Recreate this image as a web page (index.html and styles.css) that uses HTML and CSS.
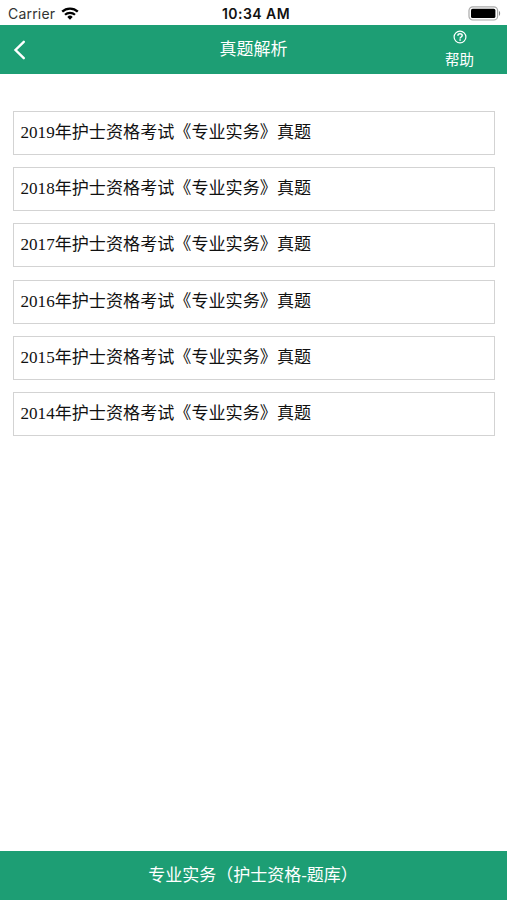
FILE: index.html
```html
<!DOCTYPE html>
<html lang="zh-CN">
<head>
    <meta charset="UTF-8">
    <meta name="viewport" content="width=device-width, initial-scale=1.0">
    <title>真题解析</title>
    <link rel="stylesheet" href="styles.css">
</head>
<body>
    <div class="status-bar">
        <div class="carrier">
            <span>Carrier</span>
            <svg class="wifi" width="18" height="13" viewBox="0 0 18 13">
                <path d="M1.2 4.7a11.2 11.2 0 0 1 15.6 0" fill="none" stroke="#000" stroke-width="2.3"/>
                <path d="M4 7.8a7.2 7.2 0 0 1 10 0" fill="none" stroke="#000" stroke-width="2.2"/>
                <path d="M9 12.8l-2.7-2.9a3.9 3.9 0 0 1 5.4 0z"/>
            </svg>
        </div>
        <div class="time">10:34 AM</div>
        <svg class="battery" width="33" height="15" viewBox="0 0 33 15">
            <rect x="1" y="0.8" width="28.6" height="13.2" rx="3.8" fill="#fff" stroke="#aaa" stroke-width="1.2"/>
            <rect x="3" y="2.8" width="24.4" height="9.2" rx="1.6"/>
            <path d="M31 5v4.8c1.5-.6 1.5-4.2 0-4.8z" fill="#888"/>
        </svg>
    </div>

    <header class="header">
        <a class="back" href="#" aria-label="返回">
            <svg width="14" height="22" viewBox="0 0 14 22">
                <path d="M10.8 2.8L2.5 11l8.3 8.2" fill="none" stroke="#fff" stroke-width="2.4" stroke-linecap="round"/>
            </svg>
        </a>
        <h1>真题解析</h1>
        <a class="help" href="#">
            <svg width="14" height="14" viewBox="0 0 14 14" fill="none" stroke="#fff">
                <circle cx="7" cy="7" r="5.9" stroke-width="1.2"/>
                <path d="M4.9 5.7c0-2.8 4.3-2.6 4.3-.2 0 1.5-2.1 1.5-2.1 3" stroke-width="1.5"/>
                <path d="M7.1 9.3v1.5" stroke-width="1.5"/>
            </svg>
            <span>帮助</span>
        </a>
    </header>

    <main class="exam-list">
        <a class="exam" href="#">2019年护士资格考试《专业实务》真题</a>
        <a class="exam" href="#">2018年护士资格考试《专业实务》真题</a>
        <a class="exam" href="#">2017年护士资格考试《专业实务》真题</a>
        <a class="exam" href="#">2016年护士资格考试《专业实务》真题</a>
        <a class="exam" href="#">2015年护士资格考试《专业实务》真题</a>
        <a class="exam" href="#">2014年护士资格考试《专业实务》真题</a>
    </main>

    <footer class="footer">专业实务（护士资格-题库）</footer>
</body>
</html>
```
FILE: styles.css
```css
* {
    margin: 0;
    padding: 0;
    box-sizing: border-box;
}

body {
    height: 100vh;
    display: flex;
    flex-direction: column;
    background: #fff;
    color: #111;
    font-family: "Liberation Sans", "Noto Sans CJK SC", sans-serif;
    overflow: hidden;
}

a {
    color: inherit;
    text-decoration: none;
}

svg {
    display: block;
}

/* Status bar */
.status-bar {
    display: grid;
    grid-template-columns: 1fr auto 1fr;
    align-items: center;
    height: 25px;
    padding: 2px 6px 0 8px;
    font-family: Inter, sans-serif;
}

.carrier {
    display: flex;
    align-items: center;
    gap: 6px;
    font-size: 14px;
    letter-spacing: 0.2px;
    color: #333;
}

.time {
    padding-left: 3px;
    font-size: 14px;
    font-weight: 600;
    letter-spacing: 0.45px;
    color: #111;
}

.battery {
    justify-self: end;
}

/* Header */
.header {
    display: grid;
    grid-template-columns: 94px 1fr 94px;
    height: 49px;
    background: #1d9e74;
    color: #fff;
}

.back {
    padding: 14px 0 0 13px;
}

.header h1 {
    font-size: 17px;
    font-weight: 400;
    line-height: 49px;
    text-align: center;
}

.help {
    display: flex;
    flex-direction: column;
    align-items: center;
    padding: 5px 1px 0 0;
    font-size: 14.5px;
    line-height: 20px;
}

.help span {
    margin-top: 6px;
}

/* Exam list */
.exam-list {
    flex: 1;
    display: flex;
    flex-direction: column;
    gap: 12.2px;
    padding: 37px 12px 0 13px;
}

.exam {
    height: 44px;
    padding-left: 6.5px;
    border: 1px solid #d3d3d3;
    font-family: "Liberation Serif", "Noto Sans CJK SC", serif;
    font-size: 17.1px;
    line-height: 41px;
}

/* Footer */
.footer {
    height: 49px;
    padding-right: 1px;
    background: #1d9e74;
    color: #fff;
    font-size: 17px;
    line-height: 49px;
    text-align: center;
}
```
